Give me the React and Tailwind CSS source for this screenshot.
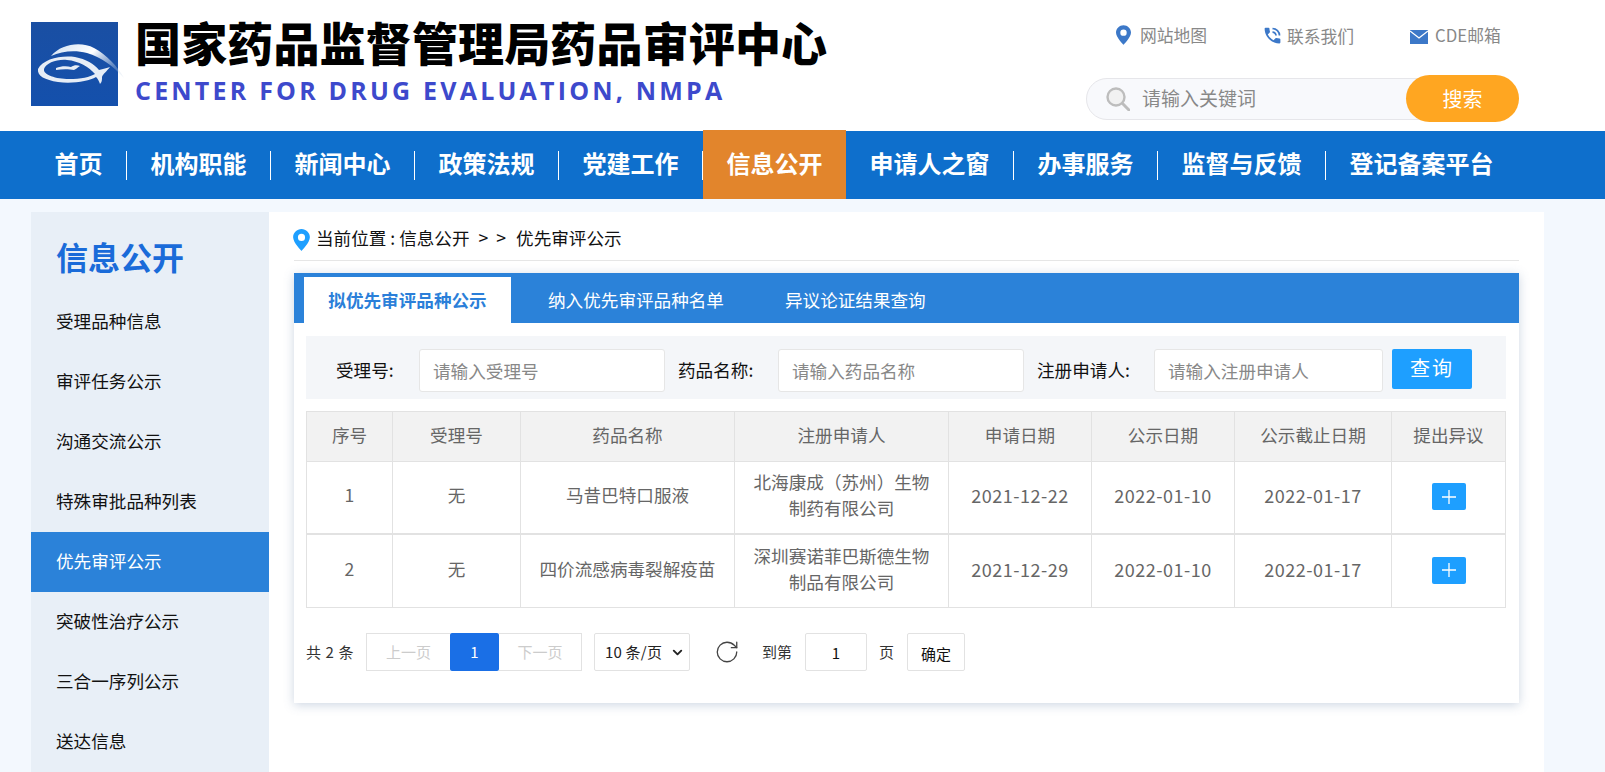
import { ChevronDown, RotateCw } from 'lucide-react'
import { MdPhoneInTalk } from 'react-icons/md'

const navItems = ['首页', '机构职能', '新闻中心', '政策法规', '党建工作', '信息公开', '申请人之窗', '办事服务', '监督与反馈', '登记备案平台']
const sideItems = ['受理品种信息', '审评任务公示', '沟通交流公示', '特殊审批品种列表', '优先审评公示', '突破性治疗公示', '三合一序列公示', '送达信息']
const heads = ['序号', '受理号', '药品名称', '注册申请人', '申请日期', '公示日期', '公示截止日期', '提出异议']
const rows = [
  ['1', '无', '马昔巴特口服液', '北海康成（苏州）生物制药有限公司', '2021-12-22', '2022-01-10', '2022-01-17'],
  ['2', '无', '四价流感病毒裂解疫苗', '深圳赛诺菲巴斯德生物制品有限公司', '2021-12-29', '2022-01-10', '2022-01-17'],
]

function Logo() {
  return (
    <svg viewBox="0 0 87 84" className="h-[84px] w-[87px] shrink-0 overflow-visible">
      <defs>
        <linearGradient id="logoBg" x1="0" y1="0" x2="0" y2="1">
          <stop offset="0" stopColor="#1a4fa3" />
          <stop offset="1" stopColor="#1450ac" />
        </linearGradient>
        <linearGradient id="swoosh" x1="0" y1="0" x2="1" y2="0.5">
          <stop offset="0" stopColor="#cfe0f2" />
          <stop offset="0.55" stopColor="#ffffff" />
          <stop offset="1" stopColor="#c8d8ea" stopOpacity="0.3" />
        </linearGradient>
      </defs>
      <rect width="87" height="84" fill="url(#logoBg)" />
      <g className="blur-[0.6px]">
        <path d="M20 34 C30 22 50 19 63 26 C76 33 86 44 93 56 C82 44 70 35 56 31 C44 28 31 29 20 34 Z" fill="url(#swoosh)" />
        <path d="M7 47 C12 37 30 33 44 35 C55 37 63 42 68 48 C72 47 76 46 79 45 C76 49 72 52 71 55 C71 58 71 60 69 62 C68 59 67 57 65 55 C58 59 42 62 27 60 C14 58 6 54 7 47 Z M13 47 C12 53 25 57 38 57 C50 57 59 55 64 52 C58 45 48 39 36 38 C26 37 15 41 13 47 Z" fill="#e6edf6" fillRule="evenodd" />
        <path d="M25 46 C30 44 36 44 40 45 C43 43 46 43 49 44 C46 46 45 47 43 48 C38 47 31 47 25 48 Z" fill="#e6edf6" />
      </g>
    </svg>
  )
}

function Pin({ className, color }) {
  return (
    <svg viewBox="0 0 16 21" className={className}>
      <path fillRule="evenodd" fill={color} d="M8 0C3.6 0 0 3.5 0 7.9 0 13 8 21 8 21s8-8 8-13.1C16 3.5 12.4 0 8 0Zm0 4.6a3.4 3.4 0 1 1 0 6.8 3.4 3.4 0 0 1 0-6.8Z" />
    </svg>
  )
}

function Header() {
  return (
    <header className="flex h-[131px] justify-between bg-white pl-[31px] pr-[86px]">
      <div className="flex items-start pt-[22px]">
        <Logo />
        <div className="ml-[17px]">
          <h1 className="-mt-[2px] text-[46px] leading-[42px] tracking-[0.15px] font-black text-black">国家药品监督管理局药品审评中心</h1>
          <p className="mt-[15px] font-['Open_Sans',sans-serif] text-[25px] leading-[26px] font-bold tracking-[3.2px] text-[#3d49cc]">
            CENTER FOR DRUG EVALUATION, NMPA
          </p>
        </div>
      </div>
      <div className="flex w-[433px] flex-col">
        <div className="flex h-[75px] items-start pt-[25px] pl-[30px] text-[16.8px] leading-5 text-[#888]">
          <div className="flex w-[146px] items-center">
            <Pin className="h-5 w-[15px]" color="#3c78c8" />
            <span className="ml-[9px]">网站地图</span>
          </div>
          <div className="flex w-[148px] items-center">
            <MdPhoneInTalk className="text-[#3c78c8]" size={21} />
            <span className="ml-[4px]">联系我们</span>
          </div>
          <div className="flex items-center">
            <svg viewBox="0 0 18 14" className="mt-1 h-[14px] w-[18px]">
              <rect width="18" height="14" fill="#3c78c8" />
              <path d="M0 1 L9 8 L18 1" fill="none" stroke="#fff" strokeWidth="1.3" />
            </svg>
            <span className="ml-[7px]">CDE邮箱</span>
          </div>
        </div>
        <div className="flex items-center">
          <div className="flex h-[42px] flex-1 items-center rounded-l-full border border-[#e6e6ea] bg-[#f8f9fc] pl-[19px]">
            <svg viewBox="0 0 24 24" className="h-6 w-6 shrink-0">
              <circle cx="10" cy="10" r="8.5" fill="#f1f1f1" stroke="#bdbdbd" strokeWidth="2.4" />
              <path d="M16.5 16.5 L23 23" stroke="#bdbdbd" strokeWidth="3" strokeLinecap="round" />
            </svg>
            <span className="ml-[12px] text-[19px] text-[#888]">请输入关键词</span>
          </div>
          <button className="z-10 -ml-[14px] h-[47px] w-[113px] rounded-full bg-[#ffa621] text-[20px] text-white">搜索</button>
        </div>
      </div>
    </header>
  )
}

function Nav() {
  return (
    <nav className="flex h-[68px] items-center bg-[#0e6fcc] pl-[31px]">
      {navItems.map((item, i) => (
        <div key={item} className="flex items-center">
          {item === '信息公开' ? (
            <a className="-mt-px flex h-[69px] items-center bg-[#e2852c] px-[23.5px] pb-[4px] text-2xl font-bold text-white">{item}</a>
          ) : (
            <a className="flex h-[68px] items-center px-[23.5px] pb-[4px] text-2xl font-bold text-white">{item}</a>
          )}
          {i < navItems.length - 1 && item !== '信息公开' && <span className="h-[29px] w-px bg-white" />}
        </div>
      ))}
    </nav>
  )
}

function Sidebar() {
  return (
    <aside className="w-[238px] shrink-0 bg-[#e8eff7]">
      <h2 className="flex h-[80px] items-center pt-[8px] pl-[25px] text-[32px] font-bold text-[#1a6bd9]">信息公开</h2>
      {sideItems.map((item) =>
        item === '优先审评公示' ? (
          <a key={item} className="block h-[60px] bg-[#2b82d9] pl-[25px] text-[17.6px] leading-[58px] text-white">{item}</a>
        ) : (
          <a key={item} className="block h-[60px] pl-[25px] text-[17.6px] leading-[58px] text-[#111]">{item}</a>
        )
      )}
    </aside>
  )
}

function Filters() {
  return (
    <div className="mx-3 mt-[13px] mr-[13px] flex h-[63px] items-start bg-[#f4f6f9] pt-[13px] text-[17.6px] text-[#111]">
      <label className="ml-[30px] w-[83px] leading-[41px]">受理号:</label>
      <input placeholder="请输入受理号" className="h-[43px] w-[246px] rounded-[3px] border border-[#e6e6e6] bg-white pl-[13px] outline-none placeholder:text-[#888]" />
      <label className="ml-[13px] w-[100px] leading-[41px]">药品名称:</label>
      <input placeholder="请输入药品名称" className="h-[43px] w-[246px] rounded-[3px] border border-[#e6e6e6] bg-white pl-[13px] outline-none placeholder:text-[#888]" />
      <label className="ml-[13px] w-[117px] leading-[41px]">注册申请人:</label>
      <input placeholder="请输入注册申请人" className="h-[43px] w-[229px] rounded-[3px] border border-[#e6e6e6] bg-white pl-[13px] outline-none placeholder:text-[#888]" />
      <button className="ml-[9px] h-10 w-20 rounded-[2px] bg-[#1e9fff] pb-[2px] text-[20px] tracking-[2px] text-white">查询</button>
    </div>
  )
}

function DataTable() {
  return (
    <table className="mx-3 mt-3 w-[1199px] table-fixed border-collapse text-center text-[17.6px] text-[#666]">
      <colgroup>
        <col className="w-[86px]" />
        <col className="w-[128px]" />
        <col className="w-[214px]" />
        <col className="w-[214px]" />
        <col className="w-[143px]" />
        <col className="w-[143px]" />
        <col className="w-[157px]" />
        <col className="w-[114px]" />
      </colgroup>
      <thead>
        <tr className="h-[50px] bg-[#f2f2f2]">
          {heads.map((h) => (
            <th key={h} className="border border-[#e2e2e2] pb-[2px] font-normal">{h}</th>
          ))}
        </tr>
      </thead>
      <tbody>
        {rows.map((row, r) => (
          <tr key={row[0]} className={r === 0 ? 'h-[72px]' : 'h-[74px]'}>
            {row.map((cell, c) => (
              <td key={c} className={`${r === 0 ? 'border border-b-2 border-[#e2e2e2]' : 'border border-[#e2e2e2]'} px-[15px] pb-[4px] leading-[26px] ${c > 3 ? 'text-lg tracking-[0.5px]' : ''}`}>{cell}</td>
            ))}
            <td className={r === 0 ? 'border border-b-2 border-[#e2e2e2] pb-[3px]' : 'border border-[#e2e2e2] pb-[3px]'}>
              <button className="inline-flex h-[27px] w-[34px] items-center justify-center rounded-[2px] bg-[#1e9fff] align-middle">
                <svg viewBox="0 0 14 14" className="h-[14px] w-[14px]">
                  <path d="M7 0 V14 M0 7 H14" stroke="#fff" strokeWidth="1.3" />
                </svg>
              </button>
            </td>
          </tr>
        ))}
      </tbody>
    </table>
  )
}

function Pagination() {
  return (
    <div className="mx-3 mt-[25px] flex h-[38px] items-center text-[15px] text-[#333]">
      <span className="w-[60px] tracking-[0.6px]">共 2 条</span>
      <div className="flex h-[38px]">
        <a className="flex w-[84px] items-center justify-center border border-r-0 border-[#e2e2e2] text-[#ccc]">上一页</a>
        <a className="flex w-[49px] items-center justify-center rounded-[2px] bg-[#1a6fe6] text-white">1</a>
        <a className="flex w-[83px] items-center justify-center border border-l-0 border-[#e2e2e2] text-[#ccc]">下一页</a>
      </div>
      <div className="relative ml-3">
        <select className="h-[38px] w-24 appearance-none rounded-[2px] border border-[#e2e2e2] bg-white pl-[10px] text-[15px] tracking-[0.2px] text-[#222] outline-none">
          <option>10 条/页</option>
          <option>20 条/页</option>
        </select>
        <ChevronDown className="pointer-events-none absolute top-[12px] right-[5px] text-[#222]" size={15} strokeWidth={3} />
      </div>
      <RotateCw className="ml-[24px] text-[#444]" size={26} strokeWidth={1.2} />
      <span className="ml-[22px]">到第</span>
      <input defaultValue="1" className="ml-[13px] h-[38px] w-[62px] rounded-[2px] border border-[#e2e2e2] text-center text-[#111] outline-none" />
      <span className="ml-3">页</span>
      <button className="ml-[13px] h-[38px] w-[58px] rounded-[2px] border border-[#e2e2e2] bg-white pt-1 text-[#111]">确定</button>
    </div>
  )
}

function Content() {
  return (
    <main className="flex-1 bg-white px-[25px]">
      <div className="flex h-[49px] items-center border-b border-[#e6e6e6] pt-[5px] text-[17.6px] text-[#111]">
        <Pin className="-ml-px mt-[3px] h-[22px] w-[17px]" color="#1e9fff" />
        <span className="ml-[6px]">当前位置 : 信息公开</span>
        <span className="ml-[9px]">&gt;</span>
        <span className="ml-[8px]">&gt;</span>
        <span className="ml-[10px]">优先审评公示</span>
      </div>
      <section className="mt-[12px] h-[430px] bg-white shadow-[0_2px_10px_rgba(90,120,160,0.3)]">
        <div className="flex h-[50px] items-end bg-[#2b82d9] pl-[10px] text-[17.6px] text-white">
          <a className="flex h-[46px] w-[207px] items-center justify-center bg-white font-bold text-[#2b7fd9]">拟优先审评品种公示</a>
          <a className="ml-[14px] flex h-[46px] items-center px-[23px]">纳入优先审评品种名单</a>
          <a className="ml-[15px] flex h-[46px] items-center px-[23px]">异议论证结果查询</a>
        </div>
        <Filters />
        <DataTable />
        <Pagination />
      </section>
    </main>
  )
}

export default function App() {
  return (
    <div className="h-[772px] w-[1605px] overflow-hidden bg-[#f3f8fe] font-['Noto_Sans_CJK_SC','Noto_Sans',sans-serif]">
      <Header />
      <Nav />
      <div className="mt-[13px] ml-[31px] flex h-[560px] w-[1513px]">
        <Sidebar />
        <Content />
      </div>
    </div>
  )
}
